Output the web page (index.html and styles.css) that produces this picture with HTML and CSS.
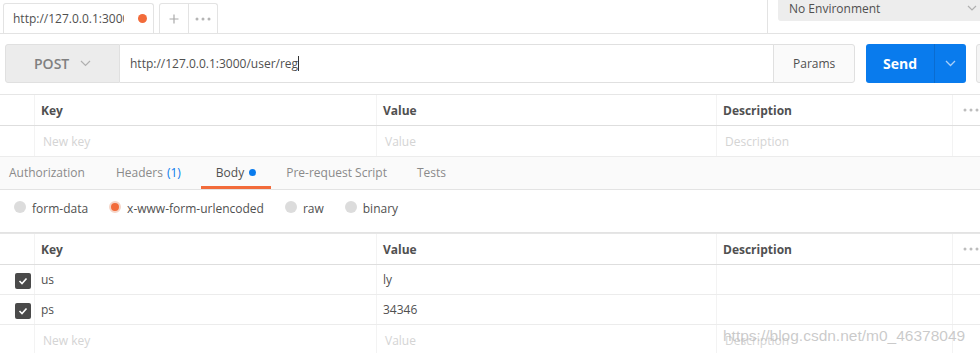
FILE: index.html
```html
<!DOCTYPE html>
<html>
<head>
<meta charset="utf-8">
<link rel="stylesheet" href="styles.css">
</head>
<body>
<div class="app">
  <div class="topbar">
    <div class="tabstrip">
      <div class="rtab"><span class="rtab-title">http://127.0.0.1:3000/user/reg</span><span class="dot-orange"></span></div>
      <div class="tabbtn"><svg width="10" height="10" viewBox="0 0 10 10"><path d="M5 0.5v9M0.5 5h9" stroke="#aaa" stroke-width="1.2"/></svg></div>
      <div class="tabbtn"><svg width="16" height="4" viewBox="0 0 16 4"><circle cx="2" cy="2" r="1.5" fill="#b5b5b5"/><circle cx="8" cy="2" r="1.5" fill="#b5b5b5"/><circle cx="14" cy="2" r="1.5" fill="#b5b5b5"/></svg></div>
    </div>
    <div class="env-wrap">
      <div class="env"><span>No Environment</span><svg class="env-caret" width="10" height="6" viewBox="0 0 10 6"><path d="M1 1l4 4 4-4" fill="none" stroke="#b0b0b0" stroke-width="1.2"/></svg></div>
    </div>
  </div>

  <div class="urlbar">
    <div class="method"><span>POST</span><svg width="11" height="7" viewBox="0 0 11 7"><path d="M1 1l4.5 4.5L10 1" fill="none" stroke="#b0b0b0" stroke-width="1.2"/></svg></div>
    <div class="url"><span>http://127.0.0.1:3000/user/reg</span><span class="cursor"></span></div>
    <div class="params">Params</div>
    <div class="send"><span class="send-main">Send</span><span class="send-caret"><svg width="11" height="7" viewBox="0 0 11 7"><path d="M1 1l4.5 4.5L10 1" fill="none" stroke="#a9cff8" stroke-width="1.3"/></svg></span></div>
    <div class="save"></div>
  </div>

  <div class="kv kv-params">
    <div class="kv-row head">
      <div class="c c-chk"></div>
      <div class="c c-key">Key</div>
      <div class="c c-val">Value</div>
      <div class="c c-desc">Description</div>
      <div class="c c-more"><svg width="16" height="4" viewBox="0 0 16 4"><circle cx="2" cy="2" r="1.5" fill="#bdbdbd"/><circle cx="8" cy="2" r="1.5" fill="#bdbdbd"/><circle cx="14" cy="2" r="1.5" fill="#bdbdbd"/></svg></div>
    </div>
    <div class="kv-row">
      <div class="c c-chk"></div>
      <div class="c c-key ph">New key</div>
      <div class="c c-val ph">Value</div>
      <div class="c c-desc ph">Description</div>
      <div class="c c-more"></div>
    </div>
  </div>

  <div class="reqtabs">
    <div class="rt first">Authorization</div>
    <div class="rt">Headers <span class="blue">(1)</span></div>
    <div class="rt active">Body<span class="dot-blue"></span></div>
    <div class="rt">Pre-request Script</div>
    <div class="rt">Tests</div>
  </div>

  <div class="bodytypes">
    <div class="bt"><span class="radio"></span>form-data</div>
    <div class="bt"><span class="radio on"></span>x-www-form-urlencoded</div>
    <div class="bt"><span class="radio"></span>raw</div>
    <div class="bt"><span class="radio"></span>binary</div>
  </div>

  <div class="kv kv-body">
    <div class="kv-row head">
      <div class="c c-chk"></div>
      <div class="c c-key">Key</div>
      <div class="c c-val">Value</div>
      <div class="c c-desc">Description</div>
      <div class="c c-more"><svg width="16" height="4" viewBox="0 0 16 4"><circle cx="2" cy="2" r="1.5" fill="#bdbdbd"/><circle cx="8" cy="2" r="1.5" fill="#bdbdbd"/><circle cx="14" cy="2" r="1.5" fill="#bdbdbd"/></svg></div>
    </div>
    <div class="kv-row body">
      <div class="c c-chk"><span class="chk"><svg width="10" height="8" viewBox="0 0 10 8"><path d="M1.5 4l2.5 2.5L8.5 1.5" stroke="#fff" stroke-width="1.6" fill="none"/></svg></span></div>
      <div class="c c-key">us</div>
      <div class="c c-val">ly</div>
      <div class="c c-desc"></div>
      <div class="c c-more"></div>
    </div>
    <div class="kv-row body">
      <div class="c c-chk"><span class="chk"><svg width="10" height="8" viewBox="0 0 10 8"><path d="M1.5 4l2.5 2.5L8.5 1.5" stroke="#fff" stroke-width="1.6" fill="none"/></svg></span></div>
      <div class="c c-key">ps</div>
      <div class="c c-val">34346</div>
      <div class="c c-desc"></div>
      <div class="c c-more"></div>
    </div>
    <div class="kv-row body last">
      <div class="c c-chk"></div>
      <div class="c c-key ph">New key</div>
      <div class="c c-val ph">Value</div>
      <div class="c c-desc ph">Description</div>
      <div class="c c-more"></div>
    </div>
  </div>

  <div class="watermark">https://blog.csdn.net/m0_46378049</div>
</div>
</body>
</html>
```

FILE: styles.css
```css
* { box-sizing: border-box; }
html, body { margin: 0; padding: 0; background: #fff; }
body { overflow: hidden; }
.app {
  position: relative;
  width: 980px;
  height: 353px;
  overflow: hidden;
  font-family: "Open Sans", sans-serif;
  font-size: 12px;
  color: #505050;
}

/* top bar */
.topbar {
  display: flex;
  height: 34px;
  border-bottom: 1px solid #e3e3e3;
}
.tabstrip {
  display: flex;
  align-items: flex-end;
  padding-left: 3px;
  width: 768px;
  flex-shrink: 0;
  border-right: 1px solid #e3e3e3;
}
.rtab {
  display: flex;
  align-items: center;
  width: 151px;
  height: 30px;
  padding-left: 9px;
  border: 1px solid #e3e3e3;
  border-bottom: none;
  border-radius: 3px 3px 0 0;
  background: #fff;
}
.rtab-title {
  width: 111px;
  flex-shrink: 0;
  overflow: hidden;
  white-space: nowrap;
  color: #505050;
}
.dot-orange {
  width: 9px;
  height: 9px;
  flex-shrink: 0;
  border-radius: 50%;
  background: #f26b3a;
  margin-left: 14px;
}
.tabbtn {
  display: flex;
  align-items: center;
  justify-content: center;
  width: 30px;
  height: 30px;
  border: 1px solid #e3e3e3;
  border-bottom: none;
  background: #fff;
}
.tabbtn:nth-child(2) { margin-left: 5px; border-radius: 3px 0 0 0; }
.tabbtn:nth-child(3) { margin-left: -1px; border-radius: 0 3px 0 0; }
.env-wrap { flex: 1; padding-left: 10px; }
.env {
  display: flex;
  align-items: center;
  height: 21px;
  padding-left: 11px;
  padding-bottom: 5px;
  background: #ededed;
  border-radius: 0 0 0 3px;
  color: #505050;
}
.env-caret { margin-left: auto; margin-right: 3px; }

/* url bar */
.urlbar {
  display: flex;
  height: 39px;
  margin: 10px 0 11px 5px;
}
.urlbar > div { flex-shrink: 0; }
.method {
  display: flex;
  align-items: center;
  width: 115px;
  padding-left: 28px;
  background: #ececec;
  border: 1px solid #e0e0e0;
  border-radius: 3px 0 0 3px;
  font-size: 14px;
  font-weight: 600;
  color: #808080;
}
.method svg { margin-left: 11px; }
.url {
  display: flex;
  align-items: center;
  width: 654px;
  padding-left: 10px;
  border: 1px solid #e0e0e0;
  border-left: none;
  color: #505050;
}
.cursor {
  width: 1px;
  height: 15px;
  background: #333;
}
.params {
  display: flex;
  align-items: center;
  width: 82px;
  padding-left: 19px;
  border: 1px solid #e0e0e0;
  border-radius: 0 3px 3px 0;
  background: #fafafa;
  margin-left: -1px;
}
.send {
  display: flex;
  width: 100px;
  margin-left: 11px;
  background: #097bed;
  border-radius: 3px;
  color: #fff;
}
.send-main {
  display: flex;
  align-items: center;
  justify-content: center;
  width: 69px;
  font-size: 14px;
  font-weight: 700;
  border-right: 1px solid #0a6cd0;
}
.send-caret {
  display: flex;
  align-items: center;
  justify-content: center;
  flex: 1;
}
.save {
  width: 40px;
  margin-left: 10px;
  border: 1px solid #e0e0e0;
  border-radius: 3px 0 0 3px;
  background: #f5f5f5;
}

/* key-value tables */
.kv { border-top: 1px solid #e6e6e6; }
.kv-row {
  display: grid;
  grid-template-columns: 35px 342px 340px 236px 1fr;
  height: 31px;
  border-bottom: 1px solid #ececec;
}
.kv-row.head { border-bottom-color: #dedede; }
.kv-row.body { height: 30px; }
.kv-row.last { border-bottom: none; }
.c {
  display: flex;
  align-items: center;
  padding-left: 6px;
  border-right: 1px solid #f3f3f3;
  white-space: nowrap;
  overflow: hidden;
}
.head .c { font-weight: 700; }
.c-chk { padding-left: 15px; }
.c-more { border-right: none; padding-left: 10px; }
.ph { color: #d4d4d4; padding-left: 8px; }
.chk {
  display: flex;
  align-items: center;
  justify-content: center;
  width: 16px;
  height: 16px;
  border-radius: 2px;
  background: #4a4a4a;
  margin-top: 3px;
}

/* request tabs */
.reqtabs {
  display: flex;
  height: 33px;
  background: #fafafa;
  border-bottom: 1px solid #e3e3e3;
}
.rt {
  display: flex;
  align-items: center;
  padding: 0 15px;
  color: #8a8a8a;
  border-bottom: 3px solid transparent;
  padding-top: 2px;
}
.rt.first { padding-left: 9px; }
.rt:nth-child(2) { padding-left: 16px; padding-right: 20px; }
.rt.active { color: #505050; border-bottom-color: #f26b3a; }
.blue { color: #097bed; margin-left: 4px; }
.dot-blue {
  width: 7px;
  height: 7px;
  border-radius: 50%;
  background: #097bed;
  margin-left: 5px;
}

/* body types */
.bodytypes {
  display: flex;
  align-items: center;
  height: 43px;
  padding-left: 14px;
  padding-bottom: 6px;
  border-bottom: 1px solid #e3e3e3;
}
.bt {
  display: flex;
  align-items: center;
  margin-right: 21px;
  color: #505050;
}
.radio {
  width: 12px;
  height: 12px;
  border-radius: 50%;
  background: #dcdcdc;
  margin-right: 6px;
  margin-top: -3px;
}
.radio.on {
  background: #f26b3a;
  border: 2px solid #f5d5c8;
}

.watermark {
  position: absolute;
  left: 723px;
  top: 327px;
  font-family: "Liberation Sans", Arial, sans-serif;
  font-size: 15.5px;
  color: rgba(185, 185, 185, 0.75);
  white-space: nowrap;
}
```
